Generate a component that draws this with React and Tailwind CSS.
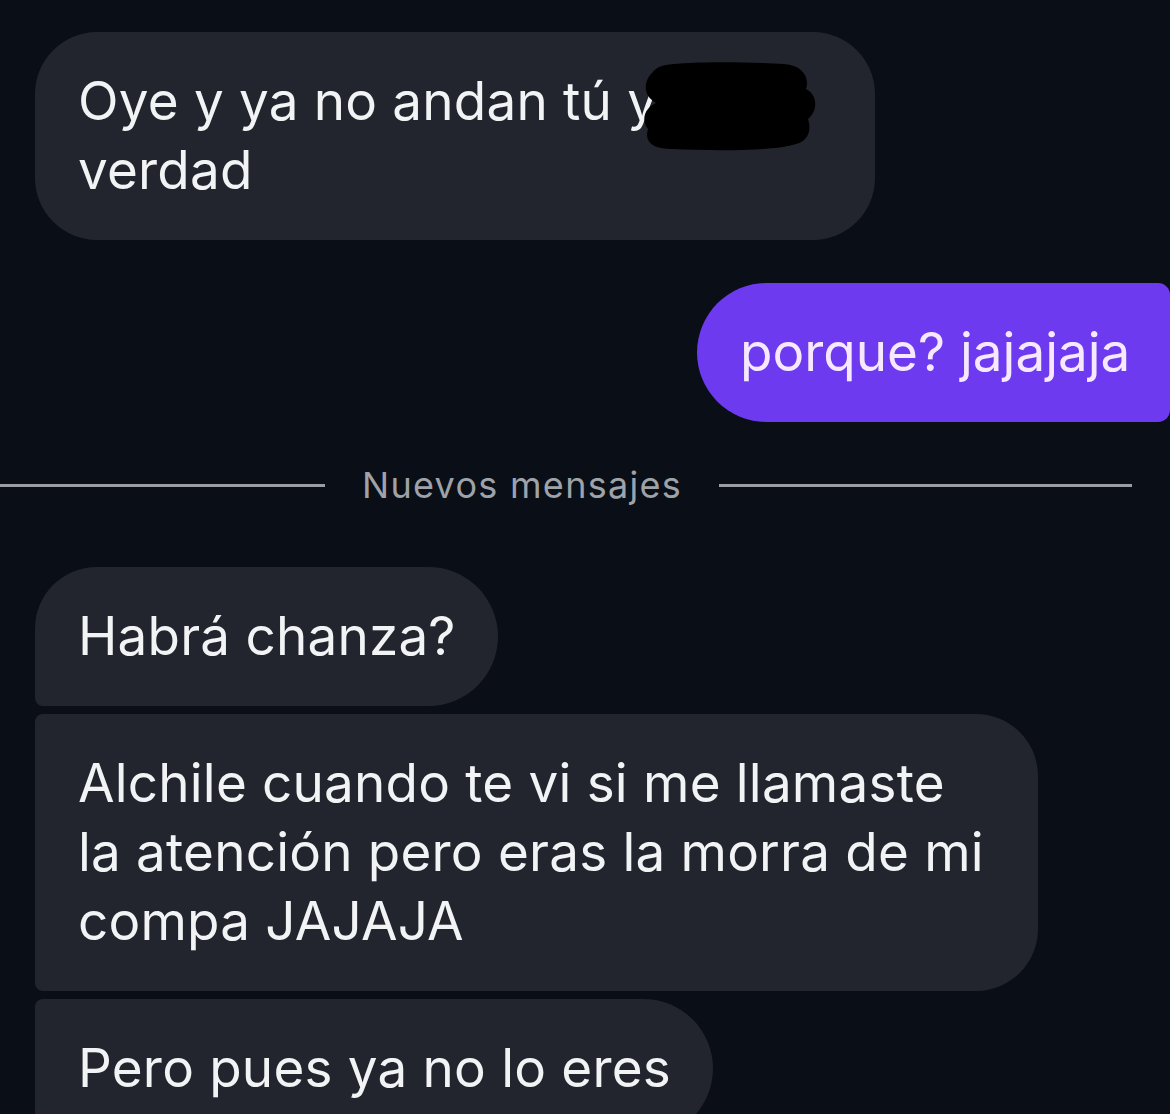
import React from 'react';

const font = { fontFamily: 'Inter, "Liberation Sans", Arial, sans-serif' };

const Received = ({ children, corners, width = 'w-fit' }) => (
  <div
    className={`bg-[#22252d] text-[#f2f3f5] text-[53px] tracking-[0.2px] leading-[69px] whitespace-nowrap pl-[43px] pr-[42px] py-[35px] ${width} ${corners}`}
  >
    {children}
  </div>
);

// scribble used to hide a name in the first message
const Redaction = () => (
  <svg
    className="absolute left-[632px] top-[27px]"
    width="186"
    height="96"
    viewBox="0 0 186 96"
  >
    <path
      d="M34 6 C60 2 120 3 152 5 C170 6 178 18 174 30 C186 36 186 52 176 60 C180 72 176 84 160 86 C140 92 80 92 40 90 C20 90 12 82 16 70 C8 60 14 48 24 44 C10 36 12 22 20 14 C24 9 28 7 34 6 Z"
      fill="#000"
    />
  </svg>
);

const App = () => {
  return (
    <div
      className="w-[1170px] h-[1114px] overflow-hidden bg-[#0a0e16] pt-[32px]"
      style={font}
    >
      <div className="relative pl-[35px]">
        <Received corners="rounded-[62px]" width="w-[840px]">
          Oye y ya no andan tú y
          <br />
          verdad
        </Received>
        <Redaction />
      </div>

      <div className="flex justify-end mt-[43px]">
        <div className="bg-[#6d3aef] text-[#f6e8ff] text-[53px] tracking-[0px] leading-[69px] whitespace-nowrap pl-[43px] py-[35px] rounded-l-[70px] rounded-r-[12px] w-[473px]">
          porque? jajajaja
        </div>
      </div>

      <div className="flex items-center mt-[45px] h-[36px]">
        <div className="h-[3px] bg-[#9a9da4] w-[325px]" />
        <span className="text-[#9ea2a9] text-[36px] tracking-[1.3px] leading-none whitespace-nowrap mx-[37px]">
          Nuevos mensajes
        </span>
        <div className="h-[3px] bg-[#9a9da4] w-[413px]" />
      </div>

      <div className="flex flex-col gap-[8px] pl-[35px] mt-[64px]">
        <Received corners="rounded-tl-[62px] rounded-r-[70px] rounded-bl-[8px]">
          Habrá chanza?
        </Received>
        <Received corners="rounded-l-[8px] rounded-r-[62px]" width="w-[1003px]">
          Alchile cuando te vi si me llamaste
          <br />
          la atención pero eras la morra de mi
          <br />
          compa JAJAJA
        </Received>
        <Received corners="rounded-tl-[8px] rounded-r-[70px]">
          Pero pues ya no lo eres
        </Received>
      </div>
    </div>
  );
};

export default App;
